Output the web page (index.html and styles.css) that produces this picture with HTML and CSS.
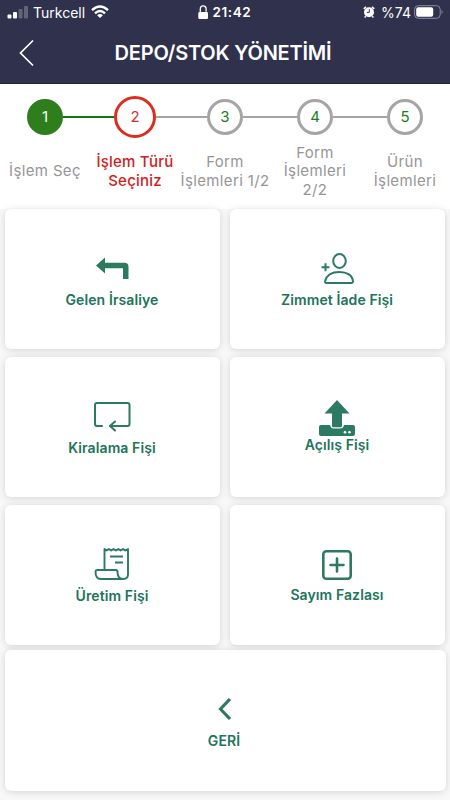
FILE: index.html
```
<!DOCTYPE html>
<html lang="tr">
<head>
    <meta charset="UTF-8">
    <meta name="viewport" content="width=device-width, initial-scale=1.0">
    <title>Depo/Stok Yönetimi</title>
    <link rel="stylesheet" href="styles.css">
</head>
<body>

    <header>
        <div class="status-bar">
            <div class="status-left">
                <svg width="21" height="14" viewBox="0 0 21 14" fill="#fff">
                    <rect x="0.5" y="9.5" width="4" height="4" rx="1"/>
                    <rect x="6" y="7" width="4" height="6.5" rx="1"/>
                    <rect x="11.5" y="4" width="4" height="9.5" rx="1" opacity=".25"/>
                    <rect x="17" y="1" width="4" height="12.5" rx="1" opacity=".25"/>
                </svg>
                <span class="carrier">Turkcell</span>
                <svg width="18" height="14" viewBox="0 0 18 14" fill="none" stroke="#fff" stroke-width="2.4">
                    <path d="M1 5.2Q9-2.2 17 5.2"/>
                    <path d="M4 8.3Q9 3.7 14 8.3"/>
                    <path d="M9 13L6.1 10.3Q9 7.9 11.9 10.3Z" fill="#fff" stroke="none"/>
                </svg>
            </div>
            <div class="status-center">
                <svg width="11" height="15" viewBox="0 0 11 15">
                    <rect x="0.3" y="7" width="9.7" height="7" rx="1.2" fill="#fff"/>
                    <path d="M2.3 7V3.8a2.9 2.9 0 0 1 5.8 0v3" fill="none" stroke="#fff" stroke-width="1.3"/>
                </svg>
                <span class="clock">21:42</span>
            </div>
            <div class="status-right">
                <svg width="12" height="12" viewBox="0 0 12 12">
                    <circle cx="6" cy="6.2" r="5" fill="#fff"/>
                    <path d="M.8 2.8L3 .9M11.2 2.8L9 .9M2.7 10.2l-1 1.2M9.3 10.2l1 1.2" stroke="#fff" stroke-width="1.6"/>
                    <path d="M6.3 3.2v3.2H3.8" fill="none" stroke="#2f314d" stroke-width="1"/>
                </svg>
                <span class="percent">%74</span>
                <svg width="30" height="14" viewBox="0 0 30 14">
                    <rect x="0.6" y="0.7" width="25.6" height="12.6" rx="3.6" fill="none" stroke="#8b8c9e"/>
                    <rect x="2.2" y="2.3" width="17" height="9.4" rx="2" fill="#fff"/>
                    <path d="M27.6 4.8q2 2.2 0 4.4z" fill="#8b8c9e"/>
                </svg>
            </div>
        </div>
        <div class="title-bar">
            <svg class="back" width="16" height="28" viewBox="0 0 16 28">
                <path d="M14 1.5L1.5 14 14 26.5" fill="none" stroke="#fff" stroke-width="1.7"/>
            </svg>
            <h1>DEPO/STOK YÖNETİMİ</h1>
        </div>
    </header>

    <div class="steps">
        <div class="step done">
            <div class="track"><span class="circle">1</span></div>
            <p>İşlem Seç</p>
        </div>
        <div class="step active">
            <div class="track"><span class="circle">2</span></div>
            <p>İşlem Türü<br>Seçiniz</p>
        </div>
        <div class="step">
            <div class="track"><span class="circle">3</span></div>
            <p>Form<br>İşlemleri 1/2</p>
        </div>
        <div class="step">
            <div class="track"><span class="circle">4</span></div>
            <p>Form<br>İşlemleri<br>2/2</p>
        </div>
        <div class="step">
            <div class="track"><span class="circle">5</span></div>
            <p>Ürün<br>İşlemleri</p>
        </div>
    </div>

    <main class="menu">
        <div class="card gelen">
            <svg width="34" height="24" viewBox="0 0 34 24">
                <path d="M1 9.5L10 1.5v5.2H29.5q4 0 4 4V23H28V12.3H10v5.2z" fill="#2d7a62"/>
            </svg>
            <span>Gelen İrsaliye</span>
        </div>
        <div class="card zimmet">
            <svg width="34" height="34" viewBox="0 0 34 34" fill="none" stroke="#2d7a62" stroke-width="2">
                <ellipse cx="19.5" cy="9" rx="6.3" ry="7"/>
                <path d="M6.3 31c-1.1 0-1.5-.8-1.2-1.8C6.5 23.4 12 20 19.5 20s13 3.4 13.4 9.2c.1 1-.3 1.8-1.4 1.8z"/>
                <path d="M1.5 15.2h8M5.5 11.2v8"/>
            </svg>
            <span>Zimmet İade Fişi</span>
        </div>
        <div class="card kiralama">
            <svg width="38" height="32" viewBox="0 0 38 32" fill="none" stroke="#2d7a62" stroke-width="2" stroke-linecap="round" stroke-linejoin="round">
                <path d="M9 26H4Q2 26 2 24V5q0-2 2-2h30.5q2 0 2 2v19q0 2-2 2H17"/>
                <path d="M22 21.5L17 26l5 4.500"/>
            </svg>
            <span>Kiralama Fişi</span>
        </div>
        <div class="card acilis">
            <svg width="38" height="38" viewBox="0 0 38 38">
                <path d="M1 29q0-2 2-2h9q.7 3.5 4 3.5h6q3.3 0 4-3.5h9q2 0 2 2v7q0 2-2 2H3q-2 0-2-2z" fill="#2d7a62"/>
                <path d="M19 2l12.5 13.5H24V28q0 1.2-1.2 1.2h-7.6Q14 29.2 14 28V15.5H6.5z" fill="#2d7a62"/>
                <circle cx="27" cy="34.2" r="1.3" fill="#fff"/>
                <circle cx="31.5" cy="34.2" r="1.3" fill="#fff"/>
            </svg>
            <span>Açılış Fişi</span>
        </div>
        <div class="card uretim">
            <svg width="36" height="34" viewBox="0 0 36 34" fill="none" stroke="#2d7a62" stroke-width="1.9" stroke-linejoin="round">
                <path d="M10.5 22V2l2 1.5L14.9 2l2.3 1.5L19.5 2l2.4 1.5L24.3 2l2.3 1.5L29 2l2.3 1.5L34 2v25.5q0 4.500-5 4.500H7c-3.700 0-5.500-3-5.500-7 0-1.200.6-2 2-2h18.300c1.200 0 1.700.6 1.700 1.800 0 4.400 1.500 7.200 5.200 7.200"/>
                <path d="M16 9.5h13M21 15.5h8"/>
            </svg>
            <span>Üretim Fişi</span>
        </div>
        <div class="card sayim">
            <svg width="32" height="32" viewBox="0 0 32 32" fill="none" stroke="#2d7a62" stroke-width="2.6">
                <rect x="2.3" y="2.3" width="27.4" height="27.4" rx="3"/>
                <path d="M16 9.5v13M9.5 16h13" stroke-linecap="round"/>
            </svg>
            <span>Sayım Fazlası</span>
        </div>
        <div class="card geri">
            <svg width="15" height="24" viewBox="0 0 15 24">
                <path d="M13 2L3.500 12l9.500 10" fill="none" stroke="#2d7a62" stroke-width="3.2"/>
            </svg>
            <span>GERİ</span>
        </div>
    </main>

</body>
</html>
```
FILE: styles.css
```
* {
    box-sizing: border-box;
    margin: 0;
    padding: 0;
}
body {
    font-family: Inter, "Liberation Sans", sans-serif;
    background-color: #fff;
    width: 450px;
    height: 800px;
    overflow: hidden;
}
svg {
    display: block;
    flex-shrink: 0;
}
header {
    background-color: #2f314d;
    height: 84px;
    color: #fff;
    border-bottom: 1px solid #20223f;
}
.status-bar {
    height: 24px;
    display: grid;
    grid-template-columns: 1fr 56px 1fr;
    padding: 0 6px 0 7px;
    font-size: 13px;
}
.status-left, .status-center, .status-right {
    display: flex;
    align-items: center;
}
.status-left {
    gap: 5px;
}
.carrier {
    width: 53px;
    font-size: 14px;
}
.status-center {
    gap: 4px;
}
.clock {
    font-weight: 600;
    font-size: 13.5px;
    letter-spacing: 0.6px;
}
.status-right {
    justify-content: flex-end;
    gap: 3px;
}
.percent {
    margin-left: 3px;
    font-size: 14px;
}
.title-bar {
    height: 58px;
    display: grid;
    grid-template-columns: 40px 1fr 40px;
    align-items: center;
}
.back {
    margin-left: 19px;
}
h1 {
    font-size: 20px;
    font-weight: 600;
    text-align: center;
    letter-spacing: -0.2px;
    white-space: nowrap;
    margin-right: 4px;
}
.steps {
    display: grid;
    grid-template-columns: repeat(5, 90px);
    height: 125px;
    padding-top: 12px;
}
.step {
    display: flex;
    flex-direction: column;
    color: #969696;
}
.track {
    height: 42px;
    display: flex;
    align-items: center;
}
.track::before, .track::after {
    content: "";
    flex: 1;
    height: 2px;
    background-color: #a5a5a5;
}
.step:first-child .track::before, .step:last-child .track::after {
    background-color: transparent;
}
.circle {
    width: 36px;
    height: 36px;
    border: 3px solid #a5a5a5;
    border-radius: 50%;
    display: flex;
    align-items: center;
    justify-content: center;
    padding-bottom: 2px;
    font-size: 15px;
    color: #16801a;
}
.done .circle {
    background-color: #2f7e1c;
    border-color: #2f7e1c;
    color: #fff;
}
.done .track::after, .active .track::before {
    background-color: #0d7a14;
}
.active .circle {
    width: 42px;
    height: 42px;
    border-color: #dd2c20;
    color: #cf3038;
}
.step p {
    height: 67px;
    display: flex;
    align-items: center;
    justify-content: center;
    text-align: center;
    white-space: nowrap;
    font-size: 15px;
    letter-spacing: 0.35px;
    line-height: 18.6px;
}
.step.active p {
    color: #d32020;
    font-weight: 500;
    letter-spacing: 0.2px;
}
.menu {
    display: grid;
    grid-template-columns: 215px 215px;
    grid-template-rows: 140px 140px 140px 141px;
    column-gap: 10px;
    row-gap: 8px;
    height: 591px;
    padding: 0 5px;
    background-color: #f8f8f8;
}
.card {
    background-color: #fff;
    border-radius: 6px;
    box-shadow: 0 1px 7px rgba(0, 0, 0, 0.15);
    display: flex;
    flex-direction: column;
    align-items: center;
    justify-content: center;
    padding-right: 1px;
    color: #20745a;
    font-size: 14px;
    font-weight: 600;
    letter-spacing: 0.1px;
    line-height: 18px;
}
.gelen {
    gap: 11px;
    padding-top: 6px;
}
.zimmet, .sayim {
    gap: 5px;
    padding-top: 2px;
}
.kiralama {
    gap: 7px;
    padding-top: 2px;
}
.acilis {
    padding-bottom: 2px;
}
.uretim {
    gap: 6px;
    padding-top: 1px;
}
.geri {
    grid-column: 1 / 3;
    margin: -3px -1px 3px 0;
    gap: 11px;
    padding-top: 6px;
    padding-right: 3px;
}
```
